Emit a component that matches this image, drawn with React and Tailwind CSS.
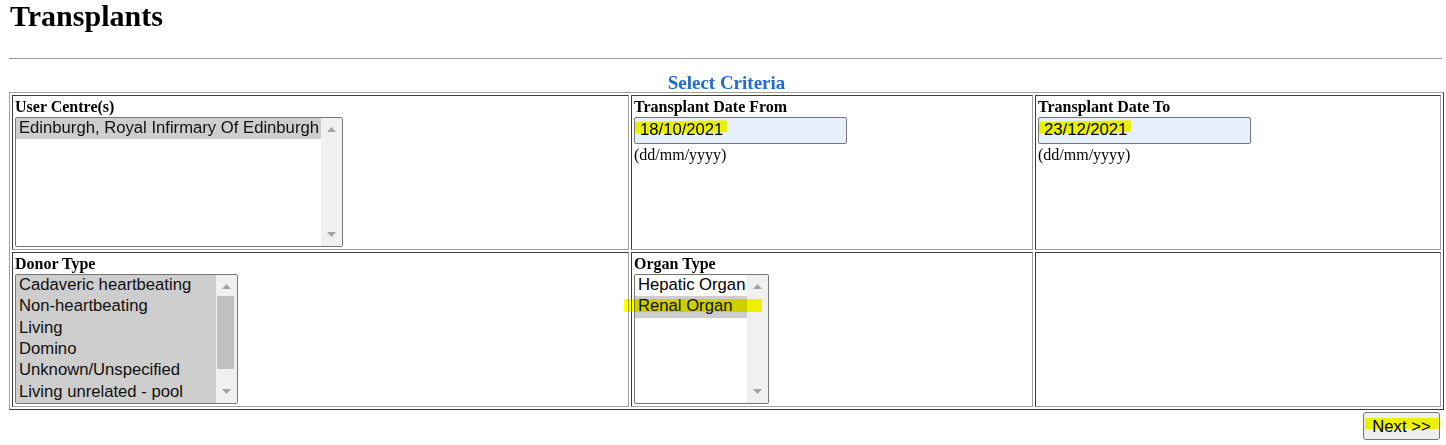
import React from 'react';

const serif = "font-['Liberation_Serif','Times_New_Roman',serif]";
const sans = "font-['Liberation_Sans',Arial,sans-serif]";

const userCentres = [{ label: 'Edinburgh, Royal Infirmary Of Edinburgh', selected: true }];

const donorTypes = [
  'Cadaveric heartbeating',
  'Non-heartbeating',
  'Living',
  'Domino',
  'Unknown/Unspecified',
  'Living unrelated - pool',
].map((label) => ({ label, selected: true }));

const organTypes = [
  { label: 'Hepatic Organ', selected: false },
  { label: 'Renal Organ', selected: true },
];

function Arrow({ down }) {
  return (
    <svg width="9" height="5" viewBox="0 0 9 5">
      <polygon points={down ? '0,0 9,0 4.5,5' : '0,5 9,5 4.5,0'} fill="#a3a3a3" />
    </svg>
  );
}

function Scrollbar({ thumb }) {
  return (
    <div className="flex w-[21px] shrink-0 flex-col bg-[#f0f0f0]">
      <div className="flex h-[21px] items-center justify-center pt-[2px]">
        <Arrow />
      </div>
      <div className="flex-1">
        {thumb && <div className="ml-[1px] h-[73px] w-[17px] bg-[#c1c1c1]" />}
      </div>
      <div className="flex h-[21px] items-center justify-center pb-[2px]">
        <Arrow down />
      </div>
    </div>
  );
}

function ListBox({ options, width, thumb, children }) {
  return (
    <div className={`relative flex h-[130px] ${width} rounded-[2px] border border-[#767676] bg-white ${sans} text-[16.67px] text-black`}>
      <div className="min-w-0 flex-1">
        {options.map((o) => (
          <div
            key={o.label}
            className={`h-[21.33px] whitespace-nowrap pl-[3px] leading-[19px] ${o.selected ? 'bg-[#cecece] text-[#101010]' : ''}`}
          >
            {o.label}
          </div>
        ))}
      </div>
      <Scrollbar thumb={thumb} />
      {children}
    </div>
  );
}

function DateField({ value }) {
  return (
    <div>
      <div className={`relative h-[27px] w-[213px] rounded-[2px] border border-[#767676] bg-[#e8f0fe] pl-[5px] pt-[2px] ${sans} text-[16.67px] leading-[19px] text-black`}>
        {value}
        <span className="absolute left-0 top-[3px] h-[12px] w-[92px] -rotate-1 rounded-[2px] bg-[#ffff00] mix-blend-multiply" />
      </div>
      <div className="pt-[2px] text-[16px] leading-[18px]">(dd/mm/yyyy)</div>
    </div>
  );
}

function Label({ children }) {
  return <div className="h-[19px] text-[16px] font-bold leading-[18px]">{children}</div>;
}

const cell =
  'align-top border border-t-[#3c3c3c] border-l-[#3c3c3c] border-r-[#a0a0a0] border-b-[#a0a0a0] px-[2px] pt-[2px] pb-[2px]';

export default function App() {
  return (
    <div className={`min-h-screen bg-white pl-[9px] text-black ${serif}`}>
      <h1 className="pl-[1px] text-[30px] font-bold leading-[32px]">Transplants</h1>
      <div className="mt-[26px] h-px w-[1433px] bg-[#9e9e9e]" />

      <div className="mt-[13px] mb-[-2px] w-[1435px] text-center text-[19px] font-bold leading-[22px] text-[#1f6bd1]">
        Select Criteria
      </div>

      <table className="w-[1435px] table-fixed border-separate border-spacing-[2px] border border-t-[#a0a0a0] border-l-[#a0a0a0] border-r-[#3c3c3c] border-b-[#3c3c3c]">
        <tbody>
          <tr>
            <td className={`${cell} w-[617px]`}>
              <Label>User Centre(s)</Label>
              <ListBox options={userCentres} width="w-[328px]" />
            </td>
            <td className={`${cell} w-[402px]`}>
              <Label>Transplant Date From</Label>
              <DateField value="18/10/2021" />
            </td>
            <td className={`${cell} w-[406px]`}>
              <Label>Transplant Date To</Label>
              <DateField value="23/12/2021" />
            </td>
          </tr>
          <tr>
            <td className={cell}>
              <Label>Donor Type</Label>
              <ListBox options={donorTypes} width="w-[223px]" thumb />
            </td>
            <td className={cell}>
              <Label>Organ Type</Label>
              <ListBox options={organTypes} width="w-[135px]">
                <span className="absolute left-[-11px] top-[24px] h-[13px] w-[138px] bg-[#ffff00] mix-blend-multiply" />
              </ListBox>
            </td>
            <td className={cell} />
          </tr>
        </tbody>
      </table>

      <div className="mt-[2px] flex w-[1435px] justify-end pr-[4px]">
        <button
          type="button"
          className={`relative h-[28px] w-[77px] rounded-[3px] border border-[#767676] bg-[#efefef] ${sans} text-[16.67px] leading-[19px] text-black`}
        >
          Next &gt;&gt;
          <span className="absolute left-[1px] top-[5px] h-[11px] w-[74px] bg-[#ffff00] mix-blend-multiply" />
        </button>
      </div>
    </div>
  );
}
